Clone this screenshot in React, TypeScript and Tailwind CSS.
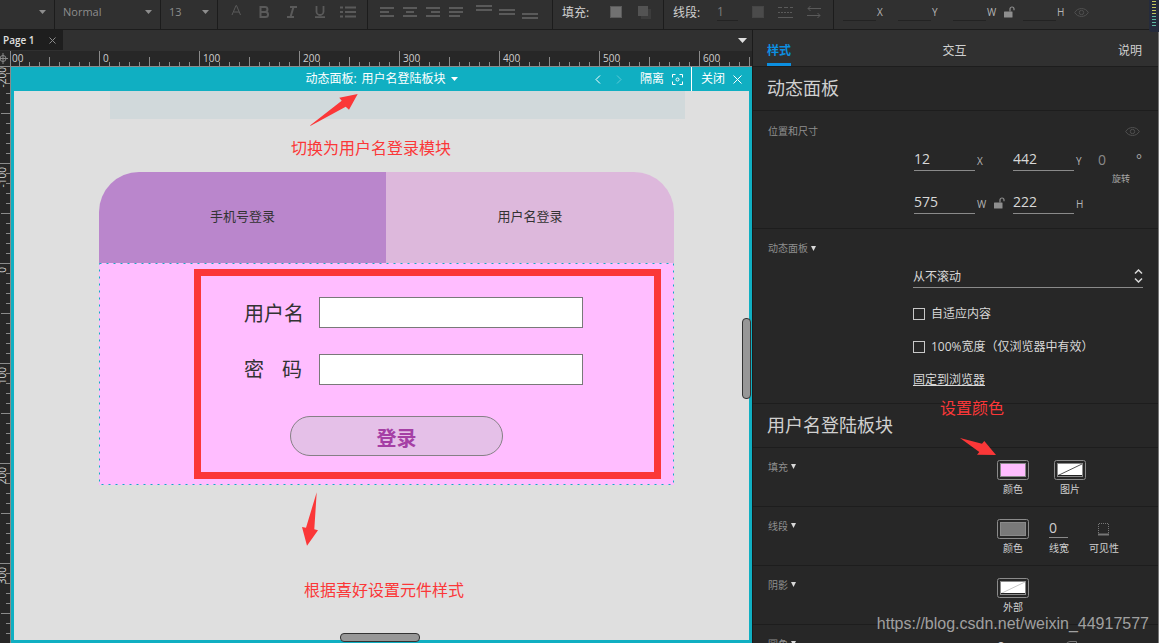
import type { ReactNode } from "react";

const rulerX = [-100, 0, 100, 200, 300, 400, 500, 600];
const rulerY = [-200, -100, 0, 100, 200, 300];
const minorTicks = [10, 20, 30, 40, 60, 70, 80, 90];

function Caret({ className = "" }: { className?: string }) {
  return (
    <svg width="7" height="4" viewBox="0 0 7 4" className={className}>
      <path d="M0 0H7L3.5 4Z" fill="currentColor" />
    </svg>
  );
}

function Eye() {
  return (
    <svg
      width="15"
      height="11"
      viewBox="0 0 15 11"
      fill="none"
      stroke="currentColor"
    >
      <path d="M.7 5.5C3.6.2 11.4.2 14.3 5.5 11.4 10.8 3.6 10.8.7 5.5Z" />
      <circle cx="7.5" cy="5.5" r="2.2" />
    </svg>
  );
}

function Unlock() {
  return (
    <svg width="11" height="12" viewBox="0 0 11 12" fill="none">
      <rect y="5.5" width="8.5" height="6" rx=".5" fill="currentColor" />
      <path
        d="M6 5.5V3A2 2 0 0 1 10 3V4.2"
        stroke="currentColor"
        strokeWidth="1.2"
      />
    </svg>
  );
}

function Group({
  className,
  children,
}: {
  className: string;
  children?: ReactNode;
}) {
  return (
    <div
      className={`flex shrink-0 items-center border-r border-[#1c1c1c] pb-[5px] ${className}`}
    >
      {children}
    </div>
  );
}

function ToolSelect({ label, value }: { label: string; value: string }) {
  return (
    <div className="relative flex w-full items-center">
      <select
        aria-label={label}
        className="h-6 w-full appearance-none bg-transparent pl-2 text-[11px] text-[#8d8d8d] outline-none"
      >
        <option>{value}</option>
      </select>
      <Caret className="pointer-events-none absolute right-2 text-[#8d8d8d]" />
    </div>
  );
}

const textTools = [
  { name: "Font color", icon: <path d="M4 10L8 0.5H8.5L12.5 10M5.5 7H11" /> },
  {
    name: "Bold",
    icon: (
      <path
        d="M4.5 2H9A2.4 2.4 0 0 1 9 6.9H4.5ZM4.5 6.9H9.5A2.5 2.5 0 0 1 9.5 12H4.5Z"
        strokeWidth="2"
      />
    ),
  },
  {
    name: "Italic",
    icon: <path d="M6 2H13M3 12H10M9.5 2L6.5 12" strokeWidth="2" />,
  },
  {
    name: "Underline",
    icon: (
      <path
        d="M4.5 1V6.5A3.5 3.5 0 0 0 11.5 6.5V1M3 12.2H13"
        strokeWidth="1.8"
      />
    ),
  },
  {
    name: "Bullets",
    icon: (
      <path
        d="M0 2.5H3M0 7H3M0 11.5H3M5 2.5H16M5 7H16M5 11.5H16"
        strokeWidth="2"
      />
    ),
  },
];

const alignTools = [
  { name: "Left", d: "M1 3H15M1 7H10M1 11H15" },
  { name: "Center", d: "M1 3H15M4 7H12M1 11H15" },
  { name: "Right", d: "M1 3H15M6 7H15M1 11H15" },
  { name: "Justify", d: "M1 3H15M1 7H15M1 11H12" },
];

const valignTools = [
  { name: "Top", d: "M0 1H16M0 5H16" },
  { name: "Middle", d: "M0 5H16M0 9H16" },
  { name: "Bottom", d: "M0 9H16M0 13H16" },
];

function AlignButton({ name, d }: { name: string; d: string }) {
  return (
    <button aria-label={name} className="flex w-[23px] justify-center">
      <svg width="16" height="14" stroke="#5a5a5a" strokeWidth="2">
        <path d={d} />
      </svg>
    </button>
  );
}

function ToolField({ label }: { label: string }) {
  return (
    <label className="flex items-center text-[10px] text-[#b5b5b5]">
      <input
        aria-label={label}
        className="mt-1 h-[14px] w-[33px] border-b border-[#232323] bg-transparent outline-none"
      />
      <span className="w-[22px] pl-px">{label}</span>
    </label>
  );
}

function Toolbar() {
  return (
    <header className="relative flex h-[30px] shrink-0 border-b border-[#1c1c1c] bg-[#303030]">
      <Group className="w-[55px]">
        <ToolSelect label="Style" value="" />
      </Group>
      <Group className="w-[106px]">
        <ToolSelect label="Weight" value="Normal" />
      </Group>
      <Group className="w-[57px]">
        <ToolSelect label="Size" value="13" />
      </Group>
      <Group className="w-[150px] pl-1">
        {textTools.map((tool) => (
          <button
            key={tool.name}
            aria-label={tool.name}
            className="flex w-7 justify-center"
          >
            <svg width="16" height="14" fill="none" stroke="#5a5a5a">
              {tool.icon}
            </svg>
          </button>
        ))}
      </Group>
      <Group className="w-[185px] gap-[5px] pl-[7px]">
        <div className="flex">
          {alignTools.map((tool) => (
            <AlignButton key={tool.name} {...tool} />
          ))}
        </div>
        <div className="flex">
          {valignTools.map((tool) => (
            <AlignButton key={tool.name} {...tool} />
          ))}
        </div>
      </Group>
      <Group className="w-[111px] gap-4 pl-[9px] text-xs text-[#d0d0d0]">
        <span className="w-8 pt-px">填充:</span>
        <button
          aria-label="Fill"
          className="size-3 border border-[#5a5a5a] bg-[#717171]"
        />
        <button aria-label="Shadow">
          <svg width="13" height="13">
            <rect x="3" y="3" width="10" height="10" fill="#3c3c3c" />
            <rect width="10" height="10" fill="#535353" />
          </svg>
        </button>
      </Group>
      <Group className="w-[170px] gap-[14px] pl-[9px] text-xs text-[#d0d0d0]">
        <span className="w-[30px] whitespace-nowrap pt-px">线段:</span>
        <input
          aria-label="Line width"
          defaultValue="1"
          className="h-[18px] w-[21px] border-b border-[#232323] bg-transparent text-[#7d7d7d] outline-none"
        />
        <button
          aria-label="Line color"
          className="size-3 border border-[#454545] bg-[#4b4b4b]"
        />
        <button aria-label="Line style">
          <svg width="15" height="12" stroke="#5a5a5a">
            <path d="M0 1.5H15" strokeDasharray="4 2" />
            <path d="M0 6.5H15" strokeDasharray="2 1" />
            <path d="M0 11.5H15" />
          </svg>
        </button>
        <button aria-label="Arrow style">
          <svg width="14" height="12" fill="none" stroke="#5a5a5a">
            <path d="M14 2.5H1M3.5 0L1 2.5 3.5 5M0 9.5H13M10.5 7L13 9.5 10.5 12" />
          </svg>
        </button>
      </Group>
      <div className="flex items-center pb-[5px] pl-[9px]">
        <ToolField label="X" />
        <ToolField label="Y" />
        <ToolField label="W" />
        <button aria-label="Lock ratio" className="-ml-1 mr-2 text-[#8e8e8e]">
          <Unlock />
        </button>
        <ToolField label="H" />
        <button aria-label="Visibility" className="-ml-1 text-[#505050]">
          <Eye />
        </button>
      </div>
      <svg width="10" height="33" className="absolute right-0 top-0 z-10">
        <rect y="-3" width="14" height="35" rx="3" fill="#252b3c" />
        <path
          d="M3 1.5H7M3 4.5H7M3 7.5H7M3 10.5H7M3 13.5H7"
          stroke="#c3c45c"
        />
        <path d="M3 16.5H7M3 19.5H7M3 22.5H7M3 25.5H7" stroke="#5db9a2" />
      </svg>
    </header>
  );
}

function HorizontalRuler() {
  return (
    <div className="flex h-4 shrink-0 border-b border-[#8a8a8a] bg-[#272727]">
      <svg
        width="11"
        height="15"
        fill="none"
        stroke="#8a8a8a"
        className="shrink-0"
      >
        <circle cx="3" cy="7.5" r="3" />
        <path d="M3 2V13M0 7.5H8M10.5 0V15" />
      </svg>
      <div className="flex min-w-0 flex-1 overflow-hidden">
        <div className="-ml-3 flex">
          {rulerX.map((n) => (
            <div key={n} className="relative w-[100px] shrink-0">
              <svg
                width="100"
                height="15"
                stroke="#8a8a8a"
                className="absolute inset-0"
              >
                <path d="M.5 0V15M50.5 6V15" />
                {minorTicks.map((x) => (
                  <path key={x} d={`M${x + 0.5} 11V15`} />
                ))}
              </svg>
              <span className="relative block pl-1 text-[10px] leading-[15px] text-[#d0d0d0]">
                {n}
              </span>
            </div>
          ))}
        </div>
      </div>
    </div>
  );
}

function VerticalRuler() {
  return (
    <div className="w-[11px] shrink-0 overflow-hidden border-r border-[#8a8a8a] bg-[#272727]">
      <div className="-mt-1">
        {rulerY.map((n) => (
          <div key={n} className="relative h-[100px] pt-1">
            <svg
              width="10"
              height="100"
              stroke="#8a8a8a"
              className="absolute inset-0"
            >
              <path d="M0 .5H10M1 50.5H10" />
              {minorTicks.map((y) => (
                <path key={y} d={`M6 ${y + 0.5}H10`} />
              ))}
            </svg>
            <span className="relative -ml-1 block w-3 rotate-180 text-[10px] leading-3 text-[#d0d0d0] [writing-mode:vertical-rl]">
              {n}
            </span>
          </div>
        ))}
      </div>
    </div>
  );
}

function LoginWidget() {
  return (
    <div className="absolute left-[85px] top-[81px] w-[575px] text-[#333]">
      <div className="flex h-[91px] overflow-hidden rounded-t-[40px] text-[13px]">
        <button className="w-[287px] bg-[#ba86cc] pb-1">手机号登录</button>
        <button className="flex-1 bg-[#ddb8dc] pb-1">用户名登录</button>
      </div>
      <form className="relative flex h-[222px] flex-col bg-[#ffbdff] pl-[145px] pt-[34px] text-xl">
        <svg className="pointer-events-none absolute inset-0 size-full">
          <rect
            x=".5"
            y=".5"
            width="574"
            height="221"
            fill="none"
            stroke="#10afc2"
            strokeDasharray="2 5"
          />
        </svg>
        <label className="flex h-[31px] items-center">
          <span className="w-[75px] pt-0.5">用户名</span>
          <input className="h-[31px] w-[264px] border border-[#797979] bg-white px-2 text-sm" />
        </label>
        <label className="mt-[26px] flex h-[31px] items-center">
          <span className="flex w-[75px] gap-[18px]">
            <span>密</span>
            <span>码</span>
          </span>
          <input
            type="password"
            className="h-[31px] w-[264px] border border-[#797979] bg-white px-2 text-sm"
          />
        </label>
        <button
          type="button"
          className="ml-[46px] mt-[31px] h-10 w-[213px] rounded-full border border-[#858085] bg-[#e5c0e8] pt-[6px] font-bold leading-8 text-[#a53fa5]"
        >
          登录
        </button>
      </form>
    </div>
  );
}

function CanvasBar() {
  return (
    <div className="grid h-6 shrink-0 grid-cols-[1fr_auto_1fr] items-center bg-[#10afc2] text-xs text-white">
      <div />
      <button className="flex items-center gap-[5px] whitespace-nowrap">
        <span>动态面板:</span>
        <span>用户名登陆板块</span>
        <Caret />
      </button>
      <div className="flex h-full items-center justify-end">
        <button aria-label="Previous state" className="mr-[15px]">
          <svg width="6" height="9" fill="none" stroke="white">
            <path d="M5 .5L1 4.5 5 8.5" />
          </svg>
        </button>
        <button aria-label="Next state" className="mr-[18px]">
          <svg width="6" height="9" fill="none" stroke="#5fc9d6">
            <path d="M1 .5L5 4.5 1 8.5" />
          </svg>
        </button>
        <button className="mr-2 flex items-center gap-2">
          隔离
          <svg width="11" height="11" fill="none" stroke="white">
            <path d="M.5 3.5V.5H3.5M7.5.5H10.5V3.5M10.5 7.5V10.5H7.5M3.5 10.5H.5V7.5" />
            <circle cx="5.5" cy="5.5" r="1.5" />
          </svg>
        </button>
        <button className="flex h-full items-center gap-2 border-l border-white pl-[9px] pr-[10px]">
          关闭
          <svg width="9" height="9" fill="none" stroke="white">
            <path d="M.5.5L8.5 8.5M8.5.5L.5 8.5" />
          </svg>
        </button>
      </div>
    </div>
  );
}

function Canvas() {
  return (
    <div className="relative flex min-w-0 flex-1 flex-col bg-[#10afc2]">
      <CanvasBar />
      <div className="relative mx-[3px] mb-[3px] flex-1 overflow-hidden bg-[#dfdfdf] text-base leading-6 text-[#fb3738]">
        <div className="absolute left-24 top-0 h-7 w-[575px] bg-[#d1d9db]" />
        <LoginWidget />
        <div className="pointer-events-none absolute left-[180px] top-[178px] h-[210px] w-[467px] border-[7px] border-[#fb3738]" />
        <svg
          width="50"
          height="34"
          fill="#fb3738"
          className="absolute left-[296px] top-[2px]"
        >
          <path d="M0 32.5L31.7 7.7 29.3 4.7 47.7 1 39 16.7 35.7 13.7.7 32.8Z" />
        </svg>
        <p className="absolute left-[277px] top-[45px]">
          切换为用户名登录模块
        </p>
        <svg
          width="18"
          height="56"
          fill="#fb3738"
          className="absolute left-[288px] top-[401px]"
        >
          <path d="M14.7.3L12.3 37.3 16 38.3 5 53.7 0 35 4 35.7Z" />
        </svg>
        <p className="absolute left-[290px] top-[487px]">
          根据喜好设置元件样式
        </p>
      </div>
      {/* scroll thumbs */}
      <div className="absolute right-px top-[251px] h-[81px] w-[9px] rounded border border-[#333] bg-[#979797]" />
      <div className="absolute bottom-px left-[329px] h-[9px] w-20 rounded border border-[#333] bg-[#979797]" />
    </div>
  );
}

function NumberField({
  label,
  value,
  children,
}: {
  label: string;
  value: string;
  children?: ReactNode;
}) {
  return (
    <div className="flex items-center">
      <input
        id={`field-${label}`}
        defaultValue={value}
        className="h-[22px] w-[61px] border-b border-[#8a8a8a] bg-transparent pb-0.5 text-sm text-[#d8d8d8] outline-none"
      />
      <label
        htmlFor={`field-${label}`}
        className="w-[18px] pl-[2px] pt-0.5 text-[10px] leading-4 text-[#b5b5b5]"
      >
        {label}
      </label>
      {children}
    </div>
  );
}

function SectionTitle({ children }: { children: ReactNode }) {
  return (
    <button className="flex h-5 items-center gap-[3px] whitespace-nowrap text-[10px] text-[#8f8f8f]">
      {children}
      <svg width="5" height="5" fill="#d8d8d8" className="mb-0.5">
        <path d="M0 0H5L2.5 5Z" />
      </svg>
    </button>
  );
}

function PanelHeading({ children }: { children: ReactNode }) {
  return (
    <h2 className="h-11 border-b border-[#1d1d1d] px-[14px] text-lg leading-[43px] text-[#d0d0d0]">
      {children}
    </h2>
  );
}

function StyleSection({
  title,
  className = "gap-[25px]",
  children,
}: {
  title: string;
  className?: string;
  children: ReactNode;
}) {
  return (
    <section className="flex h-[59px] shrink-0 justify-between border-b border-[#1d1d1d] px-[15px] pt-[9px]">
      <SectionTitle>{title}</SectionTitle>
      <div
        className={`flex w-[146px] pt-[3px] text-[10px] leading-[18px] text-[#d0d0d0] ${className}`}
      >
        {children}
      </div>
    </section>
  );
}

function Swatch({
  label,
  fill,
  slash,
}: {
  label: string;
  fill: string;
  slash?: string;
}) {
  return (
    <button className="flex w-8 flex-col items-center">
      <svg width="32" height="20" fill="none">
        <rect x=".5" y=".5" width="31" height="19" rx="2" stroke="#8a8a8a" />
        <rect x="3.5" y="3.5" width="25" height="13" fill={fill} stroke="#8a8a8a" />
        {slash && <path d="M4 15.5L28 4" stroke={slash} />}
        {slash && <path d="M4 15.5H28" stroke="#222" />}
      </svg>
      <span>{label}</span>
    </button>
  );
}

function Inspector() {
  return (
    <aside className="relative flex w-[407px] shrink-0 flex-col overflow-hidden border-l border-r border-l-[#1b1b1b] border-r-[#777] bg-[#272727]">
      <nav className="flex h-[37px] shrink-0 justify-between border-b border-[#1d1d1d] bg-[#303030] pl-[14px] pr-4 pt-1 text-xs text-[#d0d0d0]">
        <button className="border-b-[3px] border-[#0c8fe0] pt-[5px] font-bold text-[#0c8fe0]">
          样式
        </button>
        <button className="pt-0.5">交互</button>
        <button className="pt-0.5">说明</button>
      </nav>

      <PanelHeading>动态面板</PanelHeading>

      <section className="h-[118px] shrink-0 border-b border-[#1d1d1d] px-[15px] pt-[10px]">
        <div className="flex h-5 items-center justify-between text-[10px] text-[#8f8f8f]">
          <h3>位置和尺寸</h3>
          <button aria-label="Visibility" className="mr-[3px] text-[#505050]">
            <Eye />
          </button>
        </div>
        <div className="ml-auto mt-2 w-[229px]">
          <div className="flex">
            <div className="w-[99px]">
              <NumberField label="X" value="12" />
            </div>
            <NumberField label="Y" value="442" />
            <input
              id="rotation"
              defaultValue="0"
              className="ml-[6px] h-[22px] w-[38px] bg-transparent pb-0.5 text-sm text-[#8a8a8a] outline-none"
            />
            <span className="text-sm leading-[22px] text-[#a8a8a8]">°</span>
          </div>
          <label
            htmlFor="rotation"
            className="block h-[21px] pr-[13px] text-right text-[9px] leading-4 text-[#a8a8a8]"
          >
            旋转
          </label>
          <div className="flex">
            <div className="w-[99px]">
              <NumberField label="W" value="575">
                <button aria-label="Lock ratio" className="ml-px text-[#8e8e8e]">
                  <Unlock />
                </button>
              </NumberField>
            </div>
            <NumberField label="H" value="222" />
          </div>
        </div>
      </section>

      <section className="h-[175px] shrink-0 border-b border-[#1d1d1d] px-[15px] pt-[10px] text-xs text-[#d8d8d8]">
        <SectionTitle>动态面板</SectionTitle>
        <div className="ml-auto mt-[6px] w-[230px]">
          <div className="relative">
            <select
              aria-label="滚动"
              className="h-[23px] w-full appearance-none border-b border-[#8a8a8a] bg-transparent pt-0.5 outline-none"
            >
              <option>从不滚动</option>
            </select>
            <svg
              width="9"
              height="14"
              fill="none"
              stroke="#d8d8d8"
              strokeWidth="1.5"
              className="pointer-events-none absolute right-0 top-1"
            >
              <path d="M1 4.5L4.5 1 8 4.5M1 9.5L4.5 13 8 9.5" />
            </svg>
          </div>
          <div className="mt-4 flex flex-col items-start gap-[13px] leading-5">
            <label className="flex items-center gap-[6px]">
              <input
                type="checkbox"
                className="size-3 appearance-none border border-[#c8c8c8] checked:bg-[#0c8fe0]"
              />
              自适应内容
            </label>
            <label className="flex items-center gap-[6px] whitespace-nowrap">
              <input
                type="checkbox"
                className="size-3 appearance-none border border-[#c8c8c8] checked:bg-[#0c8fe0]"
              />
              100%宽度（仅浏览器中有效）
            </label>
            <a href="#pin" className="underline">
              固定到浏览器
            </a>
          </div>
        </div>
      </section>

      <div className="relative shrink-0">
        <PanelHeading>用户名登陆板块</PanelHeading>
        <div className="pointer-events-none absolute -top-2 right-[154px] text-base leading-6 text-[#fb3738]">
          设置颜色
        </div>
        <svg
          width="37"
          height="19"
          fill="#fb3738"
          className="absolute right-[161px] top-[33px]"
        >
          <path d="M0 1L22 6.7 24.3 4 36 18 17 17.7 19.3 15Z" />
        </svg>
      </div>

      <StyleSection title="填充">
        <Swatch label="颜色" fill="#ffbdff" />
        <Swatch label="图片" fill="#ffffff" slash="#555555" />
      </StyleSection>
      <StyleSection title="线段" className="gap-5">
        <Swatch label="颜色" fill="#797979" />
        <label className="flex w-5 flex-col whitespace-nowrap">
          <input
            defaultValue="0"
            className="mb-px h-[19px] w-[19px] border-b border-[#8a8a8a] bg-transparent text-sm outline-none"
          />
          线宽
        </label>
        <button className="flex flex-col items-center whitespace-nowrap">
          <svg width="12" height="20" fill="none" stroke="#777">
            <path d="M.5 16V4.5H10.5V16" strokeDasharray="1 1" />
            <path d="M0 15.5H11" strokeWidth="2" />
          </svg>
          可见性
        </button>
      </StyleSection>
      <StyleSection title="阴影">
        <Swatch label="外部" fill="#ffffff" slash="#c8c8c8" />
      </StyleSection>
      <StyleSection title="圆角">
        <input
          aria-label="圆角半径"
          defaultValue="0"
          className="h-5 w-11 border-b border-[#8a8a8a] bg-transparent text-sm outline-none"
        />
        <svg width="12" height="20" fill="none" stroke="#777">
          <path d="M.5 16V8Q.5 4.5 4 4.5H10.5V16Z" />
        </svg>
      </StyleSection>
    </aside>
  );
}

export default function App() {
  return (
    <div className="relative flex h-screen flex-col overflow-hidden bg-[#303030] font-['Open_Sans','Noto_Sans_CJK_SC',sans-serif]">
      <Toolbar />
      <div className="flex min-h-0 flex-1">
        <main className="flex min-w-0 flex-1 flex-col">
          <div className="flex h-[21px] shrink-0 items-center justify-between pr-[5px]">
            <div className="flex h-5 w-[63px] items-center justify-between self-start bg-[#1e1e1e] pl-[3px] pr-[7px] text-[10px] font-semibold text-[#e0e0e0]">
              Page 1
              <button aria-label="Close page">
                <svg width="7" height="7" fill="none" stroke="#8a8a8a">
                  <path d="M.5.5L6.5 6.5M6.5.5L.5 6.5" />
                </svg>
              </button>
            </div>
            <button aria-label="All pages" className="text-[#e0e0e0]">
              <svg width="9" height="5" fill="currentColor">
                <path d="M0 0H9L4.5 5Z" />
              </svg>
            </button>
          </div>
          <HorizontalRuler />
          <div className="flex min-h-0 flex-1">
            <VerticalRuler />
            <Canvas />
          </div>
        </main>
        <Inspector />
      </div>
      <div className="pointer-events-none absolute bottom-[7px] right-[10px] font-['Liberation_Sans',sans-serif] text-base leading-6 text-[#a0a0a0]">
        https://blog.csdn.net/weixin_44917577
      </div>
    </div>
  );
}
